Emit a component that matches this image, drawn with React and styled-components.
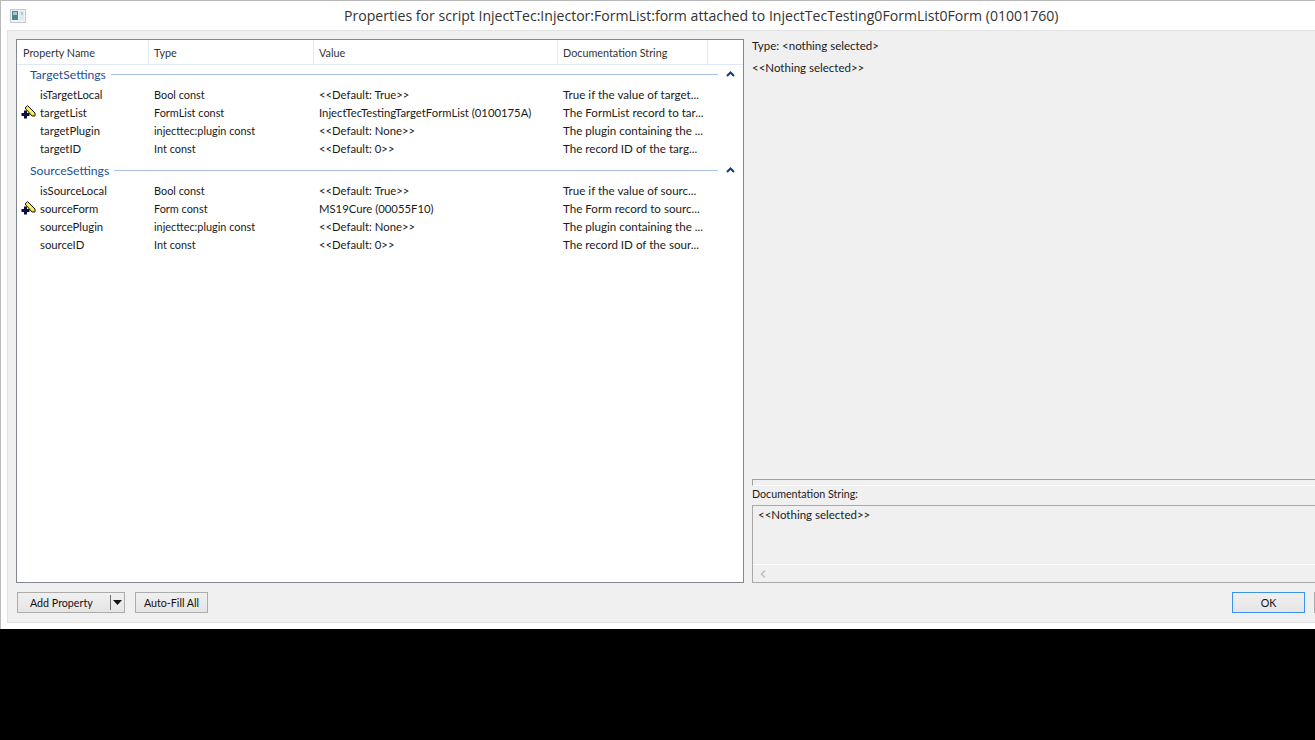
import React from 'react';
import styled, { createGlobalStyle } from 'styled-components';

const Global = createGlobalStyle`
  html, body { margin: 0; padding: 0; background: #000; }
  body { font-family: Lato, "Open Sans", "Liberation Sans", sans-serif; font-size: 11.3px; color: #1a1a1a; }
`;

const Screen = styled.div`
  width: 1315px;
  height: 740px;
  background: #000;
  overflow: hidden;
`;

const Window = styled.div`
  height: 629px;
  box-sizing: border-box;
  background: #fff;
  border-top: 1px solid #b9b9b9;
  border-left: 1px solid #b9b9b9;
  padding: 0 0 6px 6px;
  display: flex;
  flex-direction: column;
`;

const TitleBar = styled.div`
  height: 29px;
  flex: none;
  display: flex;
  align-items: center;
  padding-left: 3px;
`;

const Title = styled.div`
  margin-left: 318px;
  font-family: "Open Sans", sans-serif;
  font-size: 14.08px;
  color: #333;
  white-space: nowrap;
`;

const Panel = styled.div`
  flex: 1;
  min-height: 0;
  background: #f0f0f0;
  border-top: 1px solid #e2e2e2;
  border-left: 1px solid #e2e2e2;
  border-bottom: 1px solid #e2e2e2;
  padding: 8px 0 9px 8px;
  display: flex;
  flex-direction: column;
`;

const Split = styled.div`
  display: flex;
  height: 544px;
  flex: none;
  gap: 8px;
`;

const ListBox = styled.div`
  width: 728px;
  flex: none;
  box-sizing: border-box;
  background: #fff;
  border: 1px solid #828790;
  display: flex;
  flex-direction: column;
`;

const HeaderRow = styled.div`
  display: grid;
  grid-template-columns: 132px 165px 244px 150px 1fr;
  height: 24px;
  flex: none;
  border-bottom: 1px solid #dfeaf7;
`;

const HeaderCell = styled.div`
  padding-left: 5px;
  border-right: 1px solid #e5ecf6;
  display: flex;
  align-items: center;
  color: #333;
  font-size: 10.8px;
  &:first-child { padding-left: 6px; }
  &:last-child { border-right: none; }
`;

const GroupRow = styled.div`
  box-sizing: border-box;
  height: 20px;
  margin-top: ${p => p.$first ? '0' : '4px'};
  display: flex;
  align-items: center;
  padding: 0 8px 2px 13px;
  color: #1f4e96;
  font-size: 12.2px;
`;

const GroupLine = styled.div`
  flex: 1;
  height: 1px;
  margin: 0 8px 0 5px;
  background: #a9bfe3;
`;

const Row = styled.div`
  display: grid;
  grid-template-columns: 132px 165px 244px 150px;
  height: 18px;
  align-items: center;
  white-space: nowrap;
`;

const NameCell = styled.div`
  display: flex;
  align-items: center;
  height: 18px;
  padding-left: 4px;
`;

const IconSlot = styled.div`
  width: 19px;
  height: 18px;
  flex: none;
  display: flex;
  align-items: center;
`;

const Cell = styled.div`
  padding-left: 5px;
  font-size: ${p => p.$size || 11.3}px;
`;

const Side = styled.div`
  flex: 1;
  min-width: 0;
  display: flex;
  flex-direction: column;
  font-size: 11.5px;
`;

const TypeLine = styled.div`
  height: 14px;
  line-height: 14px;
`;

const InfoLine = styled.div`
  height: 14px;
  line-height: 14px;
  margin-top: 8px;
  flex: 1;
`;

const Splitter = styled.div`
  height: 5px;
  flex: none;
  border-top: 1px solid #a0a0a0;
  border-left: 1px solid #a0a0a0;
  border-bottom: 1px solid #fff;
`;

const DocLabel = styled.div`
  height: 19px;
  line-height: 16px;
  flex: none;
  font-size: 10.7px;
`;

const DocBox = styled.div`
  height: 78px;
  flex: none;
  box-sizing: border-box;
  border: 1px solid #a8a8a8;
  border-right: none;
  display: flex;
  flex-direction: column;
`;

const DocText = styled.div`
  flex: 1;
  padding: 2px 5px;
`;

const ScrollBar = styled.div`
  height: 17px;
  flex: none;
  border-top: 1px solid #fff;
  display: flex;
  align-items: center;
  padding-left: 7px;
`;

const BottomBar = styled.div`
  margin: 9px -62px 0 1px;
  display: flex;
  gap: 10px;
  height: 21px;
  flex: none;
  font-size: 10.7px;
`;

const Button = styled.div`
  box-sizing: border-box;
  width: ${p => p.$w}px;
  height: 21px;
  flex: none;
  background: linear-gradient(#f0f0f0, #e5e5e5);
  border: 1px solid ${p => p.$focus ? '#3c90ef' : '#acacac'};
  display: flex;
  align-items: center;
  justify-content: center;
  color: #111;
  white-space: nowrap;
`;

const SplitButton = styled(Button)`
  justify-content: flex-start;
  padding-left: 12px;
`;

const SplitLabel = styled.span`
  width: 80px;
  flex: none;
`;

const SplitDivider = styled.div`
  width: 1px;
  height: 15px;
  background: #707070;
  flex: none;
`;

const DownArrow = styled.svg`
  margin-left: 2px;
`;

const ClippedButton = styled(Button)`
  margin-left: -1px;
`;

const Spacer = styled.div`
  flex: 1;
`;

const WindowIcon = () => (
  <svg width="16" height="14" viewBox="0 0 16 14">
    <rect x="0.5" y="0.5" width="15" height="13" fill="#f2f2f2" stroke="#c8c8c8" />
    <rect x="2" y="2" width="6" height="9" fill="#4c8a8a" />
    <rect x="3" y="3" width="4" height="3" fill="#9cc9cc" />
    <rect x="9" y="2" width="5" height="9" fill="#dfeaf0" />
    <rect x="11" y="3" width="2" height="3" fill="#a9c8de" />
  </svg>
);

const EditIcon = () => (
  <svg width="15" height="14" viewBox="0 0 15 14">
    <path d="M4 3 L6.5 0.5 L14 8 L14 11 L11 11 Z" fill="#f3e23a" stroke="#1a1a1a" strokeWidth="1" strokeLinejoin="round" />
    <path d="M6.5 3 L12 8.5" stroke="#fffbc4" strokeWidth="1" />
    <path d="M3 5.5 H6 V8 H8.5 V11 H6 V13.5 H3 V11 H0.5 V8 H3 Z" fill="#0c0c3a" />
  </svg>
);

const CollapseIcon = () => (
  <svg width="9" height="6" viewBox="0 0 9 6">
    <path d="M1 5 L4.5 1.5 L8 5" fill="none" stroke="#17397f" strokeWidth="2" />
  </svg>
);

const ArrowDown = () => (
  <DownArrow width="9" height="5" viewBox="0 0 9 5">
    <path d="M0 0 H9 L4.5 5 Z" fill="#111" />
  </DownArrow>
);

const ScrollLeft = () => (
  <svg width="6" height="8" viewBox="0 0 6 8">
    <path d="M5 0.5 L1.5 4 L5 7.5" fill="none" stroke="#c2c2c2" strokeWidth="1.6" />
  </svg>
);

const columns = ['Property Name', 'Type', 'Value', 'Documentation String', ''];

const groups = [
  {
    name: 'TargetSettings',
    rows: [
      ['isTargetLocal', 'Bool const', '<<Default: True>>', 'True if the value of target...'],
      ['targetList', 'FormList const', 'InjectTecTestingTargetFormList (0100175A)', 'The FormList record to tar...', true],
      ['targetPlugin', 'injecttec:plugin const', '<<Default: None>>', 'The plugin containing the ...'],
      ['targetID', 'Int const', '<<Default: 0>>', 'The record ID of the targ...'],
    ],
  },
  {
    name: 'SourceSettings',
    rows: [
      ['isSourceLocal', 'Bool const', '<<Default: True>>', 'True if the value of sourc...'],
      ['sourceForm', 'Form const', 'MS19Cure (00055F10)', 'The Form record to sourc...', true],
      ['sourcePlugin', 'injecttec:plugin const', '<<Default: None>>', 'The plugin containing the ...'],
      ['sourceID', 'Int const', '<<Default: 0>>', 'The record ID of the sour...'],
    ],
  },
];

export default function App() {
  return (
    <Screen>
      <Global />
      <Window>
        <TitleBar>
          <WindowIcon />
          <Title>Properties for script InjectTec:Injector:FormList:form attached to InjectTecTesting0FormList0Form (01001760)</Title>
        </TitleBar>
        <Panel>
          <Split>
            <ListBox>
              <HeaderRow>
                {columns.map((c, i) => <HeaderCell key={i}>{c}</HeaderCell>)}
              </HeaderRow>
              {groups.map((g, gi) => (
                <div key={g.name}>
                  <GroupRow $first={gi === 0}>
                    {g.name}
                    <GroupLine />
                    <CollapseIcon />
                  </GroupRow>
                  {g.rows.map(r => (
                    <Row key={r[0]}>
                      <NameCell>
                        <IconSlot>{r[4] && <EditIcon />}</IconSlot>
                        {r[0]}
                      </NameCell>
                      <Cell $size={10.9}>{r[1]}</Cell>
                      <Cell>{r[2]}</Cell>
                      <Cell $size={11.6}>{r[3]}</Cell>
                    </Row>
                  ))}
                </div>
              ))}
            </ListBox>
            <Side>
              <TypeLine>{'Type: <nothing selected>'}</TypeLine>
              <InfoLine>{'<<Nothing selected>>'}</InfoLine>
              <Splitter />
              <DocLabel>Documentation String:</DocLabel>
              <DocBox>
                <DocText>{'<<Nothing selected>>'}</DocText>
                <ScrollBar><ScrollLeft /></ScrollBar>
              </DocBox>
            </Side>
          </Split>
          <BottomBar>
            <SplitButton $w={108}>
              <SplitLabel>Add Property</SplitLabel>
              <SplitDivider />
              <ArrowDown />
            </SplitButton>
            <Button $w={73}>Auto-Fill All</Button>
            <Spacer />
            <Button $w={73} $focus>OK</Button>
            <ClippedButton $w={63} />
          </BottomBar>
        </Panel>
      </Window>
    </Screen>
  );
}
